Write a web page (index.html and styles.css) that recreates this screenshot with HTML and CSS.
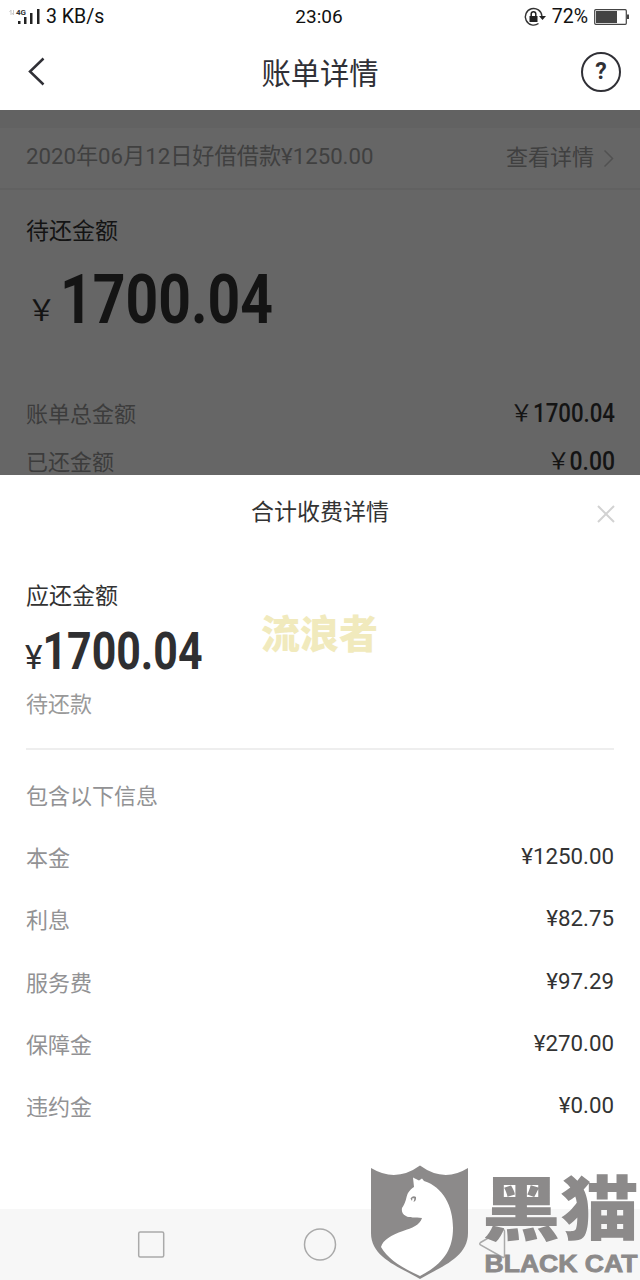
FILE: index.html
```
<!DOCTYPE html>
<html lang="zh-CN">
<head>
    <meta charset="UTF-8">
    <meta name="viewport" content="width=device-width, initial-scale=1.0">
    <title>账单详情</title>
    <link rel="stylesheet" href="styles.css">
</head>
<body>
    <div class="screen">
        <div class="status-bar">
            <div class="status-left">
                <svg width="34" height="20" viewBox="0 0 34 20">
                    <path d="M1.500 5l1.500-2v5M5.500 3v5l-1.500-2" fill="none" stroke="#ccc" stroke-width="1"/>
                    <text x="8" y="8" class="net-type">4G</text>
                    <path d="M10 14h2.500v3H10zM16 10h2.500v7H16zM22 6h2.500v11H22zM29 2h2.500v15H29z" fill="#222"/>
                </svg>
                <span>3 KB/s</span>
            </div>
            <div class="clock">23:06</div>
            <div class="status-right">
                <svg width="22" height="20" viewBox="0 0 22 20">
                    <path d="M14.500 16.500A8.300 8.300 0 1 1 17.900 9" fill="none" stroke="#333" stroke-width="1.400"/>
                    <path d="M15 9h7l-3.500 4z" fill="#222"/>
                    <path d="M5.500 9h8v6h-8z" fill="#222"/>
                    <path d="M7.200 9V7a2.300 2.300 0 0 1 4.600 0v2" fill="none" stroke="#222" stroke-width="1.500"/>
                </svg>
                <span>72%</span>
                <svg width="36" height="16" viewBox="0 0 36 16">
                    <rect x="0.700" y="0.700" width="31.600" height="14.600" rx="1" fill="#fff" stroke="#444" stroke-width="1.200"/>
                    <rect x="2" y="2" width="21" height="12" fill="#444"/>
                    <rect x="33" y="5.500" width="2" height="4.500" fill="#444"/>
                </svg>
            </div>
        </div>

        <div class="header">
            <svg width="20" height="32" viewBox="0 0 20 32">
                <path d="M16.500 2.500L3 15.500l13.500 13" fill="none" stroke="#303036" stroke-width="2.500"/>
            </svg>
            <h1>账单详情</h1>
            <div class="help">?</div>
        </div>

        <div class="bill">
            <div class="bill-link">
                <span>2020年06月12日好借借款¥1250.00</span>
                <span class="more">查看详情
                    <svg width="12" height="20" viewBox="0 0 12 20">
                        <path d="M0.500 2.500L8.500 10.500l-8 8" fill="none" stroke="#515151" stroke-width="1.500"/>
                    </svg>
                </span>
            </div>
            <div class="bill-label">待还金额</div>
            <svg class="bill-amount" width="260" height="60" viewBox="0 0 260 60">
                <text x="-1" y="53" class="yen" font-size="29">&#65509;</text>
                <text x="32" y="55" class="num" font-size="69" textLength="213" lengthAdjust="spacingAndGlyphs">1700.04</text>
            </svg>
            <div class="bill-row">
                <span>账单总金额</span>
                <svg width="110" height="30" viewBox="0 0 110 30">
                    <text x="6" y="23" class="yen" font-size="23">&#65509;</text>
                    <text x="29" y="24" class="num small" font-size="26" textLength="82" lengthAdjust="spacingAndGlyphs">1700.04</text>
                </svg>
            </div>
            <div class="bill-row">
                <span>已还金额</span>
                <svg width="110" height="30" viewBox="0 0 110 30">
                    <text x="43" y="23" class="yen" font-size="23">&#65509;</text>
                    <text x="65.500" y="24" class="num small" font-size="26" textLength="45.500" lengthAdjust="spacingAndGlyphs">0.00</text>
                </svg>
            </div>
        </div>

        <div class="sheet">
            <div class="sheet-head">
                <h2>合计收费详情</h2>
                <svg class="close" width="18" height="18" viewBox="0 0 18 18">
                    <path d="M1 1l16 16M17 1L1 17" fill="none" stroke="#d2d2d2" stroke-width="2"/>
                </svg>
            </div>
            <div class="due">
                <div class="due-label">应还金额</div>
                <svg width="190" height="50" viewBox="0 0 190 50">
                    <text x="-1" y="44" class="yen due-yen" font-size="33" textLength="17.500" lengthAdjust="spacingAndGlyphs">¥</text>
                    <text x="16.500" y="44" class="num due-num" font-size="52" textLength="160" lengthAdjust="spacingAndGlyphs">1700.04</text>
                </svg>
                <div class="due-status">待还款</div>
            </div>
            <div class="fees">
                <div class="fee"><span>包含以下信息</span></div>
                <div class="fee"><span>本金</span><b>¥1250.00</b></div>
                <div class="fee"><span>利息</span><b>¥82.75</b></div>
                <div class="fee"><span>服务费</span><b>¥97.29</b></div>
                <div class="fee"><span>保障金</span><b>¥270.00</b></div>
                <div class="fee"><span>违约金</span><b>¥0.00</b></div>
            </div>
        </div>

        <div class="nav-bar">
            <svg width="640" height="72" viewBox="0 0 640 72" fill="none" stroke="#aaa" stroke-width="1.500">
                <rect x="138.700" y="24" width="25" height="25" rx="1.500"/>
                <circle cx="320" cy="36.500" r="15.500"/>
                <path d="M480.500 34.500L502 22q2.500-1 2.500 1.500v24q0 3-2.500 1.500L480.500 37q-1.500-1.200 0-2.500z"/>
            </svg>
        </div>

        <div class="user-mark">流浪者</div>

        <svg class="brand-mark" width="280" height="125" viewBox="0 0 280 125">
            <path fill="#8c8a8a" d="M11 13Q36 28 60 10.500Q84 28 108 13V78C108 103 80 112 60 124C40 112 11 103 11 78Z"/>
            <path fill="#fff" d="M53 22.500L59 25.500L62 23.500L64 26C83 32 93 51 93 73C93 95 83 109 60 121C42 113 28 104 21 92C23 85 31 80 43 76C52 73 60 70 62 63C55 62.500 49 63 46 61C42 59 41.500 56 42 53C46 48 46 42 48 38C50 35 52 33 54 32Z"/>
            <path fill="#8c8a8a" d="M50.500 43.500Q53 40 56 42Q56.500 46 53.500 47L54.500 43.500L52.500 43L52 46Z"/>
            <text x="122" y="80" class="brand-cn" textLength="157" lengthAdjust="spacingAndGlyphs">黑猫</text>
            <text x="124.500" y="117" class="brand-en" textLength="153" lengthAdjust="spacingAndGlyphs">BLACK CAT</text>
        </svg>
    </div>
</body>
</html>
```

FILE: styles.css
```
* {
    box-sizing: border-box;
}
body {
    margin: 0;
    background: #fff;
    font-family: Roboto, "Noto Sans CJK SC", sans-serif;
    color: #333;
}
svg {
    display: block;
    flex: none;
    overflow: visible;
}
.screen {
    position: relative;
    width: 640px;
    height: 1280px;
    overflow: hidden;
    display: flex;
    flex-direction: column;
}

/* status bar */
.status-bar {
    height: 33px;
    padding: 0 10px 0 8px;
    display: grid;
    grid-template-columns: 1fr auto 1fr;
    align-items: center;
    font-size: 19.5px;
    line-height: 33px;
    color: #111;
}
.status-left,
.status-right {
    display: flex;
    align-items: center;
    gap: 4px;
}
.status-right {
    justify-content: flex-end;
    gap: 6px;
    line-height: 31px;
}
.net-type {
    font-size: 8px;
    font-weight: 700;
    fill: #333;
}
.clock {
    font-size: 19px;
}

/* title */
.header {
    height: 77px;
    padding: 0 19px 0 27px;
    display: flex;
    align-items: center;
    justify-content: space-between;
}
.header h1 {
    margin: 0 0 0 12px;
    padding-top: 6px;
    font-size: 29.3px;
    font-weight: 400;
    line-height: 71px;
    color: #303036;
}
.help {
    width: 40px;
    height: 40px;
    border: 2px solid #303036;
    border-radius: 50%;
    font-size: 23px;
    font-weight: 700;
    line-height: 35px;
    text-align: center;
    color: #303036;
}

/* bill under the mask */
.bill {
    height: 365px;
    overflow: hidden;
    background: #666;
    border-top: 18px solid #626262;
}
.bill-link {
    height: 62px;
    padding: 0 24px 0 26px;
    border-bottom: 2px solid #616161;
    display: flex;
    align-items: center;
    justify-content: space-between;
    font-size: 22.2px;
    line-height: 56px;
    color: #404040;
}
.bill-link span {
    height: 60px;
}
.more {
    display: flex;
    align-items: center;
    gap: 10px;
    font-size: 22px;
}
.bill-label {
    padding-left: 26px;
    margin-top: 22px;
    font-size: 23px;
    line-height: 40px;
    color: #141414;
}
.bill-amount {
    margin: 16px 0 70px 28px;
}
.bill-row {
    height: 48px;
    padding: 0 26px;
    display: flex;
    justify-content: space-between;
    align-items: flex-start;
    font-size: 22px;
    line-height: 33px;
    color: #3c3c3c;
}
.num {
    font-family: Roboto, sans-serif;
    font-weight: 700;
    fill: #141414;
}
.num.small {
    font-weight: 500;
}
.yen {
    font-family: "Noto Sans CJK SC", sans-serif;
    fill: #141414;
}

/* bottom sheet */
.sheet {
    height: 734px;
    background: #fff;
}
.sheet-head {
    position: relative;
    height: 76px;
}
.sheet-head h2 {
    margin: 0;
    font-size: 23px;
    font-weight: 400;
    line-height: 76px;
    text-align: center;
}
.close {
    position: absolute;
    right: 25px;
    top: 30px;
}
.due {
    height: 199px;
    margin: 0 26px;
    padding-top: 26px;
    border-bottom: 2px solid #eee;
}
.due-label {
    font-size: 23px;
    line-height: 40px;
}
.due svg {
    margin-top: 8px;
}
.due-num,
.due-yen {
    fill: #2f2f31;
}
.due-yen {
    font-family: Roboto, sans-serif;
}
.due-status {
    margin-top: 10px;
    font-size: 22px;
    line-height: 40px;
    color: #999;
}
.fees {
    padding: 16px 26px 0;
}
.fee {
    height: 62.2px;
    display: flex;
    justify-content: space-between;
    font-size: 22px;
    line-height: 62px;
    color: #929294;
}
.fee b {
    font-size: 22.3px;
    font-weight: 400;
    line-height: 57px;
    color: #333;
}

/* system navigation */
.nav-bar {
    height: 71px;
    background: #f7f7f7;
}
.nav-bar svg {
    margin-top: -1px;
}

/* watermarks */
.user-mark {
    position: absolute;
    left: 261px;
    top: 605px;
    font-size: 39px;
    font-weight: 900;
    line-height: 60px;
    color: #f1eabd;
}
.brand-mark {
    position: absolute;
    left: 360px;
    top: 1155px;
}
.brand-cn {
    font-family: "Noto Sans CJK SC", sans-serif;
    font-size: 70px;
    font-weight: 900;
    fill: #8c8a8a;
}
.brand-en {
    font-family: "Liberation Sans", sans-serif;
    font-size: 23px;
    font-weight: 700;
    fill: #8c8a8a;
    stroke: #8c8a8a;
    stroke-width: 0.8px;
}
```
